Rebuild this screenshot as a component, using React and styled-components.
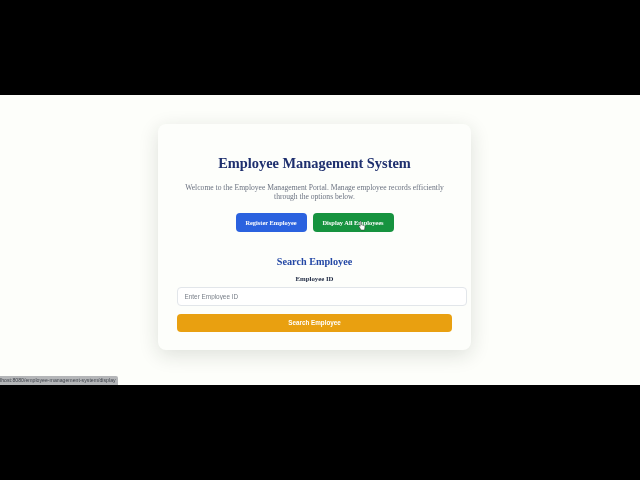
import React from "react"
import styled, { createGlobalStyle } from "styled-components"

const GlobalStyle = createGlobalStyle`
  html, body {
    margin: 0;
    height: 100%;
    background: #000;
  }
`

const Screen = styled.div`
  width: 640px;
  height: 480px;
  display: flex;
  flex-direction: column;
  background: #000;
  overflow: hidden;
`

const Letterbox = styled.div`
  flex: 1;
  background: #000;
`

const Stage = styled.main`
  position: relative;
  height: 290px;
  display: flex;
  justify-content: center;
  align-items: flex-start;
  padding: 29px 11px 0 0;
  box-sizing: border-box;
  background: #fdfefa;
  font-family: "Liberation Serif", "Times New Roman", serif;
  filter: blur(0.3px);
`

const Card = styled.section`
  width: 275px;
  height: 226px;
  padding: 0 19px;
  display: flex;
  flex-direction: column;
  align-items: center;
  background: #fdfefb;
  border-radius: 8px;
  box-shadow: 0 5px 20px rgba(30, 40, 30, 0.14);
`

const Title = styled.h1`
  margin: 29.5px 0 0;
  font-size: 14.4px;
  line-height: 18px;
  font-weight: 700;
  color: #1e2f6e;
`

const Intro = styled.p`
  margin: 11px 0 0;
  width: 275px;
  font-size: 7.6px;
  line-height: 9.5px;
  text-align: center;
  color: #6b7280;
`

const ActionRow = styled.div`
  display: flex;
  gap: 6px;
  margin-top: 11.5px;
`

const ActionButton = styled.button`
  position: relative;
  height: 19px;
  padding: 0;
  width: ${p => p.$width}px;
  border: none;
  border-radius: 4px;
  background: ${p => p.$color};
  color: #fff;
  font-family: inherit;
  font-size: 6.4px;
  font-weight: 700;
`

const Cursor = styled.svg`
  position: absolute;
  left: 45px;
  top: 7px;
  width: 8px;
  height: 11px;
`

const SearchTitle = styled.h2`
  margin: 23px 0 0;
  font-size: 10.2px;
  line-height: 13px;
  font-weight: 700;
  color: #2347a5;
`

const FieldLabel = styled.label`
  margin-top: 6px;
  font-size: 6.8px;
  line-height: 10px;
  font-weight: 700;
  color: #1c2740;
`

const Input = styled.input`
  align-self: flex-start;
  flex: none;
  box-sizing: content-box;
  width: 275px;
  height: 17px;
  margin-top: 3px;
  padding: 0 6.5px;
  border: 1px solid #e2e6ea;
  border-radius: 4px;
  background: #fff;
  font-family: "Liberation Sans", Arial, sans-serif;
  font-size: 6.4px;
  outline: none;

  &::placeholder {
    color: #7a808a;
    opacity: 1;
  }
`

const SearchButton = styled.button`
  align-self: stretch;
  height: 18.5px;
  margin-top: 7.5px;
  padding: 0;
  border: none;
  border-radius: 4px;
  background: #e9a010;
  color: #fff;
  font-family: "Liberation Sans", Arial, sans-serif;
  font-size: 6.3px;
  font-weight: 700;
`

const StatusLink = styled.div`
  position: absolute;
  left: 0;
  bottom: 0;
  width: 118px;
  height: 9px;
  background: #b4b6b8;
  color: #3c4048;
  font-family: "Liberation Sans", Arial, sans-serif;
  font-size: 5.2px;
  line-height: 9px;
  white-space: nowrap;
  border-top-right-radius: 2px;
`

const App = () => {
  return (
    <Screen>
      <GlobalStyle />
      <Letterbox />
      <Stage>
        <Card>
          <Title>Employee Management System</Title>
          <Intro>
            Welcome to the Employee Management Portal. Manage employee records efficiently through the options below.
          </Intro>
          <ActionRow>
            <ActionButton $color="#2b62df" $width={71}>Register Employee</ActionButton>
            <ActionButton $color="#16933f" $width={81}>
              Display All Employees
              <Cursor viewBox="0 0 8 11">
                <path d="M2 1.2c.5-.5 1.2-.2 1.2.5v3l3 .8c.6.2.9.7.8 1.3L6.500 10H3L1 6.500c-.3-.6.3-1 .9-.6l.3.3z" fill="#fff" stroke="#333" strokeWidth="0.5" />
              </Cursor>
            </ActionButton>
          </ActionRow>
          <SearchTitle>Search Employee</SearchTitle>
          <FieldLabel htmlFor="employee-id">Employee ID</FieldLabel>
          <Input id="employee-id" placeholder="Enter Employee ID" />
          <SearchButton>Search Employee</SearchButton>
        </Card>
        <StatusLink>lhost:8080/employee-management-system/display</StatusLink>
      </Stage>
      <Letterbox />
    </Screen>
  )
}

export default App
